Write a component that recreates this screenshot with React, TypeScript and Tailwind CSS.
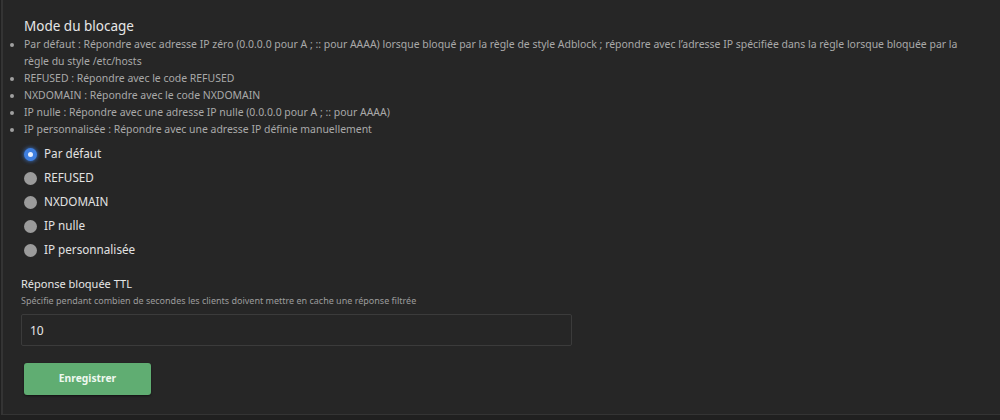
import { useState } from 'react'

const modes = [
  { id: 'default', label: 'Par défaut' },
  { id: 'refused', label: 'REFUSED' },
  { id: 'nxdomain', label: 'NXDOMAIN' },
  { id: 'null_ip', label: 'IP nulle' },
  { id: 'custom_ip', label: 'IP personnalisée' },
]

const hints = [
  'Par défaut : Répondre avec adresse IP zéro (0.0.0.0 pour A ; :: pour AAAA) lorsque bloqué par la règle de style Adblock ; répondre avec l\u2019adresse IP spécifiée dans la règle lorsque bloquée par la règle du style /etc/hosts',
  'REFUSED : Répondre avec le code REFUSED',
  'NXDOMAIN : Répondre avec le code NXDOMAIN',
  'IP nulle : Répondre avec une adresse IP nulle (0.0.0.0 pour A ; :: pour AAAA)',
  'IP personnalisée : Répondre avec une adresse IP définie manuellement',
]

function Radio({ checked }: { checked: boolean }) {
  if (checked) {
    return (
      <span className="w-[13px] h-[13px] rounded-full bg-[#3f7fe0] flex items-center justify-center shadow-[0_0_4px_#3f7fe0]">
        <span className="w-[5px] h-[5px] rounded-full bg-[#e8f0ff]" />
      </span>
    )
  }
  return <span className="w-[13px] h-[13px] rounded-full bg-[#9b9b9b]" />
}

export default function App() {
  const [mode, setMode] = useState('default')
  const [ttl, setTtl] = useState('10')

  return (
    <div className="w-[1000px] h-[420px] bg-[#202020] font-['Noto_Sans',sans-serif] overflow-hidden">
      <div className="h-[415px] bg-[#262626] border-l-[2px] border-b border-[#343434] ml-[1px] pt-[17px]">
        <div className="pl-[21px] text-[13.5px] leading-[19px] text-[#e6e6e6]">Mode du blocage</div>
        <ul className="pl-[21px] pr-[30px] list-disc text-[10.45px] leading-[17px] text-[#a9a9a9] marker:text-[#a0a0a0]">
          {hints.map((h) => (
            <li key={h}>{h}</li>
          ))}
        </ul>

        <div className="mt-[4px] pl-[21px] flex flex-col">
          {modes.map((m) => (
            <label
              key={m.id}
              className="h-[24px] flex items-center gap-[7px] cursor-pointer text-[11.7px] text-[#e2e2e2]"
              onClick={() => setMode(m.id)}
            >
              <Radio checked={mode === m.id} />
              {m.label}
            </label>
          ))}
        </div>

        <div className="mt-[14px] pl-[18px]">
          <div className="text-[11px] leading-[16px] text-[#e6e6e6]">Réponse bloquée TTL</div>
          <div className="mt-[2px] text-[9px] leading-[14px] text-[#9c9c9c]">
            Spécifie pendant combien de secondes les clients doivent mettre en cache une réponse filtrée
          </div>
          <input
            value={ttl}
            onChange={(e) => setTtl(e.target.value)}
            className="mt-[6px] w-[551px] h-[32px] bg-[#262626] border border-[#3b3b3b] rounded-[2px] px-[8px] text-[12px] text-[#e6e6e6] outline-none"
          />
          <button className="mt-[17px] ml-[3px] block w-[127px] h-[32px] rounded-[3px] bg-[#60ad72] text-[10.3px] font-bold text-[#eef8ef] shadow-[0_1px_2px_rgba(0,0,0,0.5)]">
            Enregistrer
          </button>
        </div>
      </div>
    </div>
  )
}
